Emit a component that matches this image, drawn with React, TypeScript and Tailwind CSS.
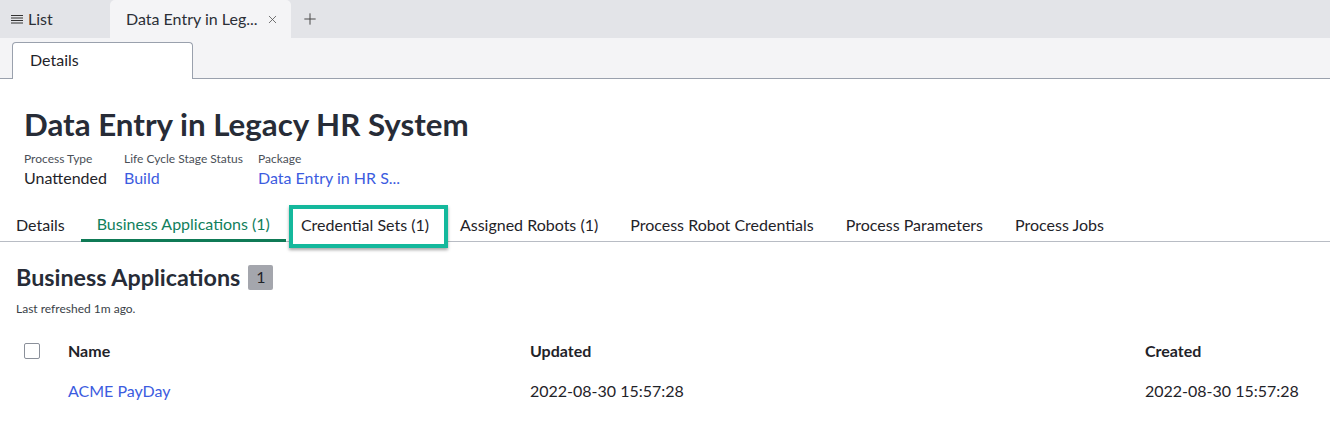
import { Plus, X } from "lucide-react";

const tabs = [
  "Details",
  "Business Applications (1)",
  "Credential Sets (1)",
  "Assigned Robots (1)",
  "Process Robot Credentials",
  "Process Parameters",
  "Process Jobs",
];

function ListIcon() {
  return (
    <svg width="12" height="10" viewBox="0 0 12 10" className="text-[#333]" aria-hidden>
      <path d="M0 1.5h12M0 4h12M0 6.5h12M0 9h12" stroke="currentColor" strokeWidth="1" />
    </svg>
  );
}

export default function App() {
  return (
    <div className="h-[440px] w-[1330px] overflow-hidden bg-white text-[#1f2329]" style={{ fontFamily: "Lato, 'Open Sans', sans-serif" }}>
      {/* browser-like tabs */}
      <div className="flex h-[38px] items-end bg-[#e3e4e8]">
        <div className="flex h-[38px] w-[110px] items-center gap-[5px] pl-[11px] text-[16px] text-[#2b2f36]">
          <ListIcon />
          <span>List</span>
        </div>
        <div className="flex h-[38px] w-[181px] items-center justify-between rounded-t-[5px] bg-[#f4f4f6] pl-[16px] pr-[12px] text-[16px] text-[#2b2f36]">
          <span>Data Entry in Leg...</span>
          <X className="h-[13px] w-[13px] text-[#555]" strokeWidth={1.5} />
        </div>
        <div className="flex h-[38px] w-[38px] items-center justify-center">
          <Plus className="h-[18px] w-[18px] text-[#444]" strokeWidth={1.3} />
        </div>
      </div>

      {/* details tab strip */}
      <div className="flex h-[41px] items-end border-b border-[#9aa1ad] bg-[#f4f4f6] pl-[12px]">
        <div className="-mb-px flex h-[37px] w-[181px] items-center rounded-t-[4px] border border-b-0 border-[#9aa1ad] bg-white pb-[2px] pl-[17px] text-[16px] text-[#1f2329]">
          Details
        </div>
      </div>

      {/* header */}
      <div className="px-[24px] pt-[24px]">
        <h1 className="whitespace-nowrap text-[31.3px] font-bold leading-[42px] text-[#272c37]">Data Entry in Legacy HR System</h1>
        <div className="mt-[6px] flex">
          <div className="w-[100px]">
            <div className="whitespace-nowrap text-[12px] leading-[16px] text-[#4a4f57]">Process Type</div>
            <div className="whitespace-nowrap text-[16px] leading-[22px] text-[#1f2329]">Unattended</div>
          </div>
          <div className="w-[134px]">
            <div className="whitespace-nowrap text-[12px] leading-[16px] text-[#4a4f57]">Life Cycle Stage Status</div>
            <div className="text-[16px] leading-[22px] text-[#3c5ce0]">Build</div>
          </div>
          <div>
            <div className="text-[12px] leading-[16px] text-[#4a4f57]">Package</div>
            <div className="whitespace-nowrap text-[16px] leading-[22px] text-[#3c5ce0]">Data Entry in HR S...</div>
          </div>
        </div>
      </div>

      {/* section tabs */}
      <div className="mt-[13px] flex h-[40px] items-stretch border-b border-[#b8bcc4]">
        {tabs.map((t, i) => {
          const active = i === 1;
          const boxed = i === 2;
          return (
            <div
              key={t}
              className={
                active
                  ? "-mb-px flex items-center whitespace-nowrap border-b-[3px] border-[#0f7a56] px-[16px] pt-[7px] text-[16px] text-[#11805c]"
                  : boxed
                    ? "relative z-10 ml-[3px] mr-[-4px] mt-[3px] flex h-[43px] w-[159px] shrink-0 items-center self-start whitespace-nowrap border-[4px] border-[#14b89c] bg-white pb-[3px] pl-[8px] text-[16px] text-[#1f2329] shadow-[0_2px_3px_rgba(0,0,0,0.35)]"
                    : "flex items-center whitespace-nowrap px-[16px] pt-[7px] text-[16px] text-[#1f2329]"
              }
            >
              {t}
            </div>
          );
        })}
      </div>

      {/* section */}
      <div className="px-[16px] pt-[19px]">
        <div className="flex items-center gap-[8px]">
          <h2 className="whitespace-nowrap text-[23.3px] font-bold leading-[32px] text-[#272c37]">Business Applications</h2>
          <span className="flex h-[25px] w-[25px] items-center justify-center rounded-[2px] bg-[#a4a6ad] text-[16px] text-[#1f2329]">1</span>
        </div>
        <div className="mt-[8px] text-[12px] leading-[16px] text-[#3a3f47]">Last refreshed 1m ago.</div>
      </div>

      {/* table */}
      <div className="mt-[14px] grid grid-cols-[68px_462px_615px_1fr] text-[16px]">
        <div className="flex h-[40px] items-center pl-[24px]">
          <span className="h-[16px] w-[16px] rounded-[2px] border border-[#8b909a] bg-white" />
        </div>
        <div className="flex h-[40px] items-center font-bold text-[#1f2329]">Name</div>
        <div className="flex h-[40px] items-center font-bold text-[#1f2329]">Updated</div>
        <div className="flex h-[40px] items-center font-bold text-[#1f2329]">Created</div>

        <div className="h-[40px]" />
        <div className="flex h-[40px] items-center text-[#3c5ce0]">ACME PayDay</div>
        <div className="flex h-[40px] items-center text-[#1f2329]">2022-08-30 15:57:28</div>
        <div className="flex h-[40px] items-center text-[#1f2329]">2022-08-30 15:57:28</div>
      </div>
    </div>
  );
}
